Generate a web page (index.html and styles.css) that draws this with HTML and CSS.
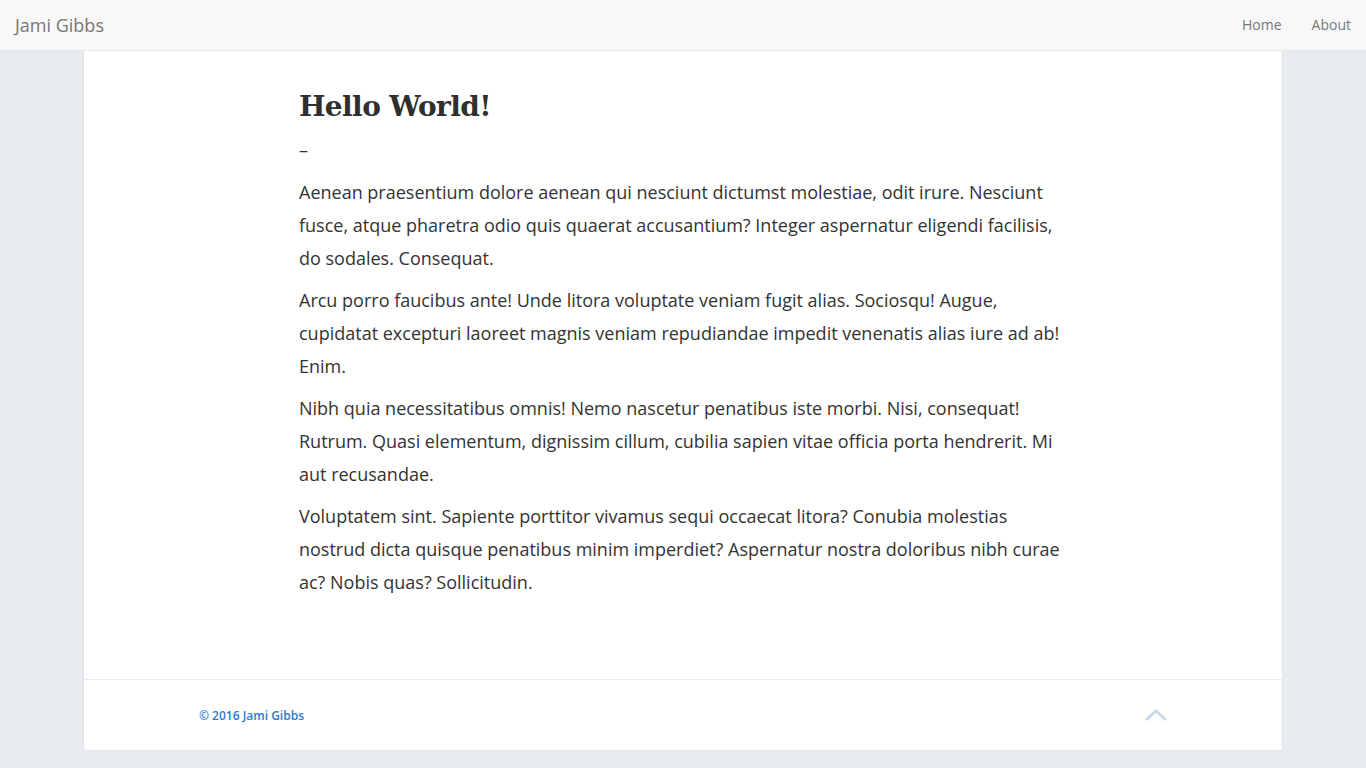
FILE: index.html
```html
<!DOCTYPE html>
<html lang="en">
<head>
<meta charset="utf-8">
<title>Jami Gibbs</title>
<link rel="stylesheet" href="styles.css">
</head>
<body>
<header class="navbar">
  <a class="brand" href="#">Jami Gibbs</a>
  <nav class="nav">
    <a href="#">Home</a>
    <a href="#">About</a>
  </nav>
</header>
<div class="page">
  <main class="content">
    <article class="post">
      <h1 class="title">Hello World!</h1>
      <p class="dash">–</p>
      <p>Aenean praesentium dolore aenean qui nesciunt dictumst molestiae, odit irure. Nesciunt fusce, atque pharetra odio quis quaerat accusantium? Integer aspernatur eligendi facilisis, do sodales. Consequat.</p>
      <p>Arcu porro faucibus ante! Unde litora voluptate veniam fugit alias. Sociosqu! Augue, cupidatat excepturi laoreet magnis veniam repudiandae impedit venenatis alias iure ad ab! Enim.</p>
      <p>Nibh quia necessitatibus omnis! Nemo nascetur penatibus iste morbi. Nisi, consequat! Rutrum. Quasi elementum, dignissim cillum, cubilia sapien vitae officia porta hendrerit. Mi aut recusandae.</p>
      <p>Voluptatem sint. Sapiente porttitor vivamus sequi occaecat litora? Conubia molestias nostrud dicta quisque penatibus minim imperdiet? Aspernatur nostra doloribus nibh curae ac? Nobis quas? Sollicitudin.</p>
    </article>
  </main>
  <footer class="footer">
    <a class="copy" href="#">© 2016 Jami Gibbs</a>
    <a class="top" href="#" aria-label="Back to top">
      <svg width="24" height="14" viewBox="0 0 24 14"><path d="M2 12 L12 3 L22 12" fill="none" stroke="#c9d8e6" stroke-width="3"/></svg>
    </a>
  </footer>
</div>
</body>
</html>
```

FILE: styles.css
```css
* { box-sizing: border-box; }
html, body { margin: 0; padding: 0; }
body {
  background: #e8ecef;
  font-family: "Open Sans", "Liberation Sans", sans-serif;
  color: #333;
}
a { text-decoration: none; }
.navbar {
  height: 51px;
  background: #f8f8f8;
  border-bottom: 1px solid #e4e6e8;
  display: flex;
  align-items: center;
  justify-content: space-between;
  padding: 0 0 0 15px;
}
.brand {
  font-size: 18px;
  color: #777;
  line-height: 50px;
}
.nav { display: flex; }
.nav a {
  font-size: 14px;
  color: #777;
  padding: 0 15px;
  line-height: 50px;
}
.page {
  width: 1200px;
  margin: 0 auto;
  background: #fff;
  border-left: 1px solid #dfe4e8;
  border-right: 1px solid #dfe4e8;
  border-bottom: 1px solid #dfe4e8;
}
.content {
  padding: 34px 0 71px;
}
.post {
  width: 768px;
  margin: 0 auto;
}
.title {
  font-family: "DejaVu Serif", "Liberation Serif", serif;
  font-weight: bold;
  font-size: 28px;
  letter-spacing: -0.6px;
  line-height: 44px;
  margin: 0 0 9px;
  color: #2f2f2f;
}
.post p {
  font-size: 18px;
  line-height: 33px;
  margin: 0 0 9px;
  color: #333;
}
.post p.dash {
  margin: 0 0 14px;
  line-height: 24px;
}
.footer {
  border-top: 1px solid #e8ecef;
  height: 71px;
  display: flex;
  align-items: center;
  justify-content: space-between;
  padding: 0 114px 0 115px;
}
.copy {
  font-size: 12px;
  font-weight: 600;
  color: #2a7ad2;
}
.top { display: flex; }
```
